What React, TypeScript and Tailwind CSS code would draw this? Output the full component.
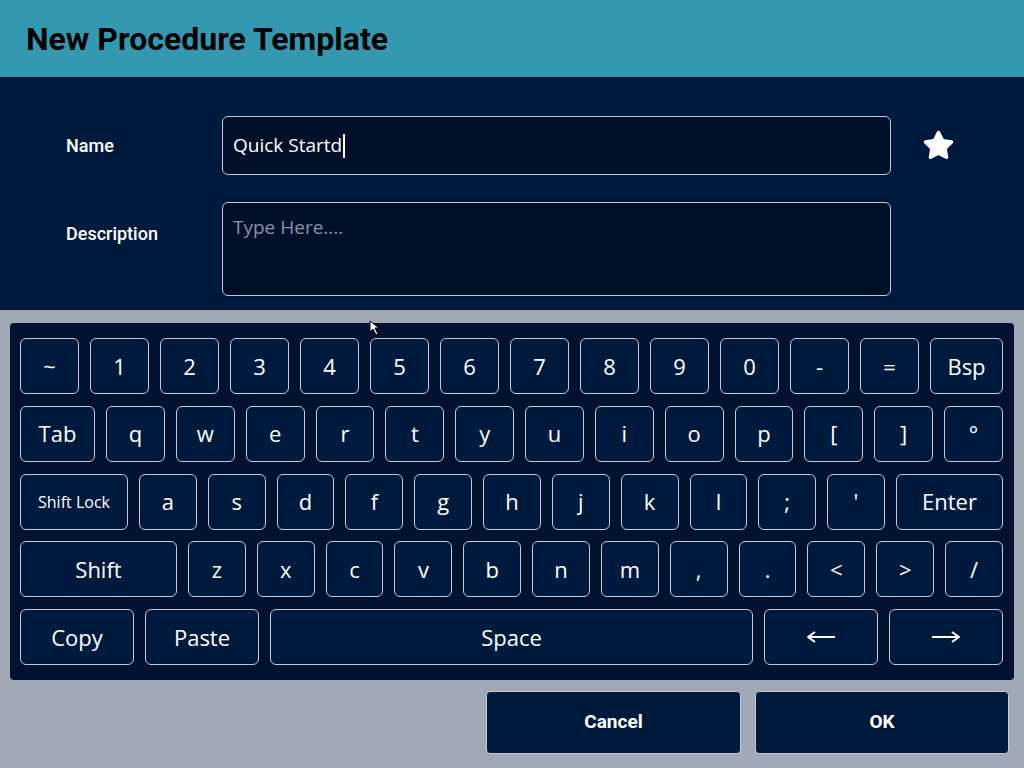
import { Star } from "lucide-react";

const keyRows: { label: string; w?: string; small?: boolean }[][] = [
  [
    { label: "~" }, { label: "1" }, { label: "2" }, { label: "3" }, { label: "4" },
    { label: "5" }, { label: "6" }, { label: "7" }, { label: "8" }, { label: "9" },
    { label: "0" }, { label: "-" }, { label: "=" }, { label: "Bsp", w: "w-[73px]" },
  ],
  [
    { label: "Tab", w: "w-[75px]" }, { label: "q" }, { label: "w" }, { label: "e" },
    { label: "r" }, { label: "t" }, { label: "y" }, { label: "u" }, { label: "i" },
    { label: "o" }, { label: "p" }, { label: "[" }, { label: "]" }, { label: "°" },
  ],
  [
    { label: "Shift Lock", w: "w-[108px]", small: true }, { label: "a" }, { label: "s" },
    { label: "d" }, { label: "f" }, { label: "g" }, { label: "h" }, { label: "j" },
    { label: "k" }, { label: "l" }, { label: ";" }, { label: "'" },
    { label: "Enter", w: "w-[107px]" },
  ],
  [
    { label: "Shift", w: "w-[157px]" }, { label: "z" }, { label: "x" }, { label: "c" },
    { label: "v" }, { label: "b" }, { label: "n" }, { label: "m" }, { label: "," },
    { label: "." }, { label: "<" }, { label: ">" }, { label: "/" },
  ],
  [
    { label: "Copy", w: "w-[114px]" }, { label: "Paste", w: "w-[114px]" },
    { label: "Space", w: "w-[483px]" }, { label: "left", w: "w-[114px]" },
    { label: "right", w: "w-[114px]" },
  ],
];

function Arrow({ dir }: { dir: "left" | "right" }) {
  return (
    <svg width="30" height="14" viewBox="0 0 30 14" className={dir === "right" ? "" : "-scale-x-100"}>
      <path d="M1 7 H27 M21 2 L28 7 L21 12" fill="none" stroke="white" strokeWidth="2" strokeLinejoin="round" />
    </svg>
  );
}

function Key({ label, w, small }: { label: string; w?: string; small?: boolean }) {
  return (
    <button
      className={
        (w ? w + " shrink-0" : "flex-1 min-w-0") +
        " h-[56px] rounded-[6px] border border-[#c4cad3] bg-[#001a3d] text-white flex items-center justify-center " +
        (small ? "text-[16px]" : "text-[22px]")
      }
    >
      {label === "left" || label === "right" ? <Arrow dir={label} /> : label}
    </button>
  );
}

export default function App() {
  return (
    <div
      className="relative w-[1024px] h-[768px] bg-[#a1a9b6] overflow-hidden"
      style={{ fontFamily: "Roboto, sans-serif" }}
    >
      <div className="h-[77px] bg-[#3399b0] flex items-center px-[26px]">
        <h1 className="text-[32px] font-bold text-black">New Procedure Template</h1>
      </div>

      <div className="h-[233px] bg-[#001a3d] pt-[39px]">
        <div className="flex items-center h-[59px]">
          <div className="w-[222px] pl-[66px] text-white text-[18px] font-medium">Name</div>
          <div className="w-[669px] h-[59px] rounded-[6px] border border-[#c4cad3] bg-[#020f29] flex items-center px-[10px]">
            <span className="text-white text-[19px]" style={{ fontFamily: "'Open Sans', sans-serif" }}>
              Quick Startd
            </span>
            <span className="w-[2px] h-[24px] bg-white ml-[1px]"></span>
          </div>
          <div className="flex-1 pl-[31px]">
            <Star size={33} fill="white" stroke="white" strokeWidth={1.5} strokeLinejoin="round" />
          </div>
        </div>
        <div className="flex items-start mt-[27px]">
          <div className="w-[222px] pl-[66px] pt-[18px] text-white text-[18px] font-medium">
            Description
          </div>
          <div
            className="w-[669px] h-[94px] rounded-[6px] border border-[#c4cad3] bg-[#020f29] px-[10px] pt-[10px] text-[19px] text-[#8793a6]"
            style={{ fontFamily: "'Open Sans', sans-serif" }}
          >
            Type Here....
          </div>
        </div>
      </div>

      <div
        className="mx-[10px] mt-[13px] h-[357px] rounded-[4px] bg-[#011230] pt-[15px] pl-[10px] pr-[11px] flex flex-col gap-y-[11.75px]"
        style={{ fontFamily: "'Open Sans', sans-serif" }}
      >
        {keyRows.map((row, i) => (
          <div key={i} className="flex gap-x-[11px]">
            {row.map((k) => (
              <Key key={k.label} {...k} />
            ))}
          </div>
        ))}
      </div>

      <div className="flex justify-end gap-[14px] pr-[15px] mt-[11px]">
        <button className="w-[255px] h-[63px] rounded-[4px] border border-[#c4cad3] bg-[#001a3d] text-white text-[19px] font-bold">
          Cancel
        </button>
        <button className="w-[254px] h-[63px] rounded-[4px] border border-[#c4cad3] bg-[#001a3d] text-white text-[19px] font-bold">
          OK
        </button>
      </div>

      <svg className="absolute left-[369px] top-[320px]" width="14" height="16" viewBox="0 0 14 16">
        <path d="M1 1 L1 12 L4 9 L7 15 L9 14 L6 8 L10 8 Z" fill="white" stroke="black" strokeWidth="1" />
      </svg>
    </div>
  );
}
